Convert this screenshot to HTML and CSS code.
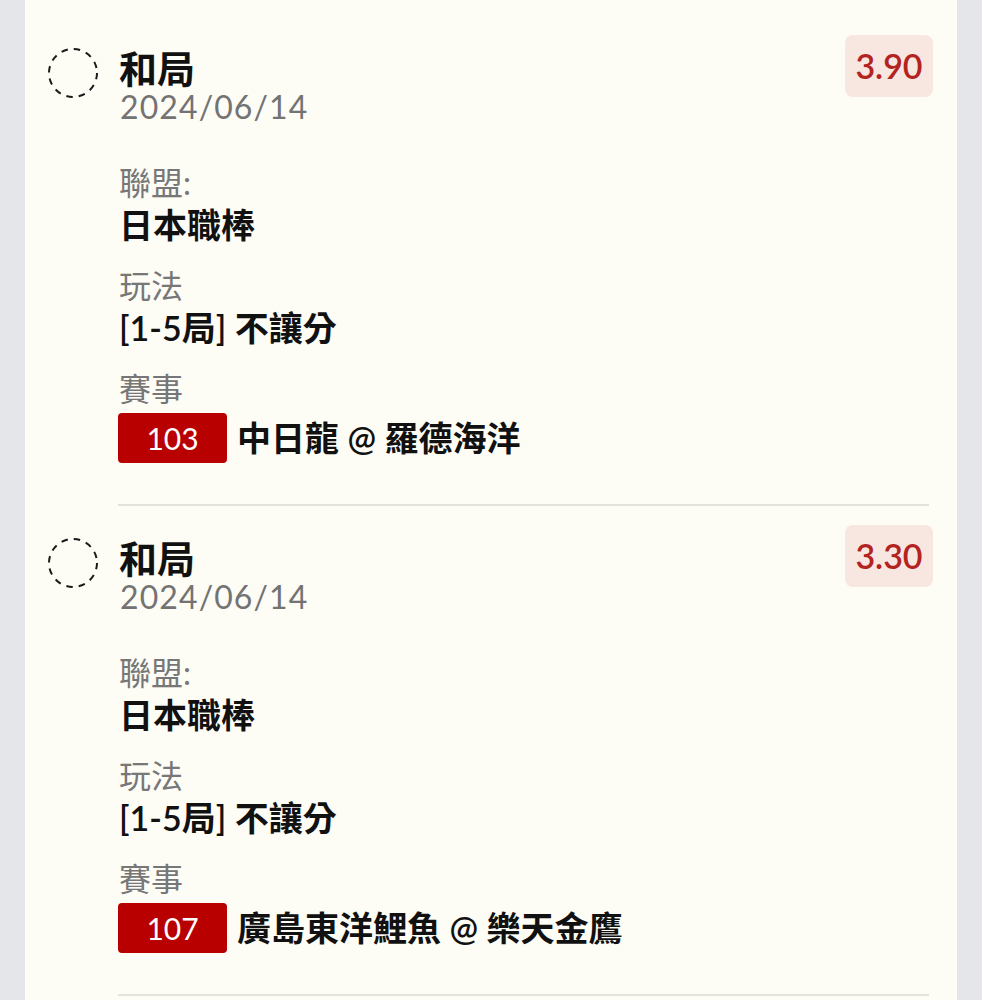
FILE: index.html
```html
<!DOCTYPE html>
<html lang="zh-Hant">
<head>
<meta charset="utf-8">
<title>投注紀錄</title>
<link rel="stylesheet" href="styles.css">
</head>
<body>
<div class="card">
  <div class="bet">
    <div class="bet-icon">
      <svg width="50" height="50" viewBox="0 0 50 50"><circle cx="25" cy="25" r="24" fill="none" stroke="#1a1a1a" stroke-width="2" stroke-dasharray="6.5 6.07"/></svg>
    </div>
    <div class="bet-main">
      <div class="bet-head">
        <div class="bet-title">
          <div class="title">和局</div>
          <div class="date">2024/06/14</div>
        </div>
        <div class="odds">3.90</div>
      </div>
      <div class="field">
        <div class="label">聯盟:</div>
        <div class="value">日本職棒</div>
      </div>
      <div class="field">
        <div class="label">玩法</div>
        <div class="value">[1-5局] 不讓分</div>
      </div>
      <div class="field">
        <div class="label">賽事</div>
        <div class="value match"><span class="code">103</span><span>中日龍 @ 羅德海洋</span></div>
      </div>
    </div>
  </div>
  <div class="bet">
    <div class="bet-icon">
      <svg width="50" height="50" viewBox="0 0 50 50"><circle cx="25" cy="25" r="24" fill="none" stroke="#1a1a1a" stroke-width="2" stroke-dasharray="6.5 6.07"/></svg>
    </div>
    <div class="bet-main">
      <div class="bet-head">
        <div class="bet-title">
          <div class="title">和局</div>
          <div class="date">2024/06/14</div>
        </div>
        <div class="odds">3.30</div>
      </div>
      <div class="field">
        <div class="label">聯盟:</div>
        <div class="value">日本職棒</div>
      </div>
      <div class="field">
        <div class="label">玩法</div>
        <div class="value">[1-5局] 不讓分</div>
      </div>
      <div class="field">
        <div class="label">賽事</div>
        <div class="value match"><span class="code">107</span><span>廣島東洋鯉魚 @ 樂天金鷹</span></div>
      </div>
    </div>
  </div>
</div>
</body>
</html>
```
FILE: styles.css
```css
html, body {
  margin: 0;
  padding: 0;
  background: #e5e6ea;
  height: 1000px;
  overflow: hidden;
}
body {
  font-family: "Lato", "Noto Sans CJK TC", sans-serif;
  color: #141414;
}
.card {
  margin: 0 25px;
  background: #fdfcf5;
  padding-top: 16px;
  min-height: 1200px;
}
.bet {
  display: flex;
  padding: 32px 28px 0 23px;
}
.bet-icon {
  width: 50px;
  height: 50px;
  flex: none;
  margin-right: 20px;
}
.bet-icon svg {
  display: block;
}
.bet-main {
  flex: 1;
  border-bottom: 2px solid #e4e2dc;
  padding-bottom: 41px;
}
.bet-head {
  display: flex;
  justify-content: space-between;
  align-items: flex-start;
  margin-bottom: 36px;
}
.title {
  font-size: 38px;
  line-height: 40px;
  font-weight: 700;
  color: #111;
  padding-left: 1px;
}
.date {
  font-size: 32px;
  line-height: 38px;
  color: #737373;
  letter-spacing: 1.1px;
  padding-left: 2px;
}
.odds {
  margin-top: -13px;
  margin-right: -4px;
  width: 88px;
  height: 62px;
  line-height: 62px;
  text-align: center;
  border-radius: 8px;
  background: #f8e6e0;
  color: #b3231f;
  font-size: 34px;
  font-weight: 600;
}
.field {
  padding-left: 1px;
}
.field + .field {
  margin-top: 19px;
}
.label {
  font-size: 32px;
  line-height: 42px;
  color: #777;
}
.value {
  font-size: 34px;
  line-height: 42px;
  font-weight: 600;
  color: #111;
}
.match {
  display: flex;
  align-items: center;
  gap: 10px;
  margin-top: 3px;
  margin-left: -1px;
}
.code {
  width: 109px;
  height: 50px;
  line-height: 50px;
  text-align: center;
  border-radius: 4px;
  background: #b80000;
  color: #fff;
  font-size: 30px;
  font-weight: 400;
  flex: none;
}
```
